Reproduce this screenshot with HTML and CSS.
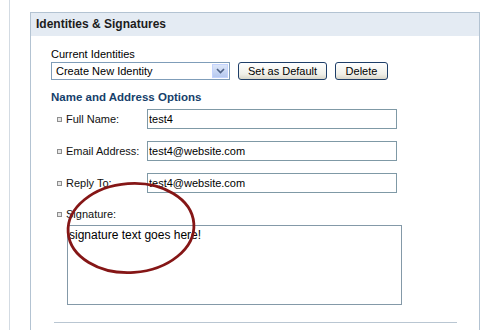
FILE: index.html
```html
<!DOCTYPE html>
<html lang="en">
<head>
    <meta charset="UTF-8">
    <title>Identities &amp; Signatures</title>
    <link rel="stylesheet" href="styles.css">
</head>
<body>

    <div class="page">
        <!-- Identities panel -->
        <div class="panel">
            <div class="panel-head">Identities &amp; Signatures</div>

            <div class="panel-body">
                <div class="caption">Current Identities</div>
                <div class="identity-row">
                    <div class="select">
                        <span class="select-value">Create New Identity</span>
                        <span class="select-arrow">
                            <svg width="9" height="6" viewBox="0 0 9 6"><path d="M1 1 L4.5 4.5 L8 1" fill="none" stroke="#4d6185" stroke-width="1.6"/></svg>
                        </span>
                    </div>
                    <button class="btn btn-default">Set as Default</button>
                    <button class="btn btn-delete">Delete</button>
                </div>

                <h2 class="section-title">Name and Address Options</h2>

                <div class="field">
                    <span class="bullet"></span>
                    <label>Full Name:</label>
                    <input type="text" value="test4">
                </div>
                <div class="field">
                    <span class="bullet"></span>
                    <label>Email Address:</label>
                    <input type="text" value="test4@website.com">
                </div>
                <div class="field">
                    <span class="bullet"></span>
                    <label>Reply To:</label>
                    <input type="text" value="test4@website.com">
                </div>

                <div class="field field-sig">
                    <span class="bullet"></span>
                    <label>Signature:</label>
                </div>
                <textarea class="signature">signature text goes here!</textarea>

                <div class="divider"></div>
            </div>
        </div>

        <!-- hand-drawn highlight -->
        <svg class="circle" width="140" height="100" viewBox="0 0 140 100">
            <ellipse cx="70" cy="50" rx="63" ry="44.5" fill="none" stroke="#851616" stroke-width="2.8" transform="rotate(-4 70 50)"/>
        </svg>
    </div>

</body>
</html>
```

FILE: styles.css
```css
/* General */
body {
    margin: 0;
    background: #fff;
    font-family: "Liberation Sans", Arial, sans-serif;
    font-size: 11px;
    color: #000;
}

.page {
    position: relative;
    height: 330px;
    overflow: hidden;
    margin-left: 9px;
    border-left: 1px solid #d3dbe3;
    padding: 12px 0 0 20px;
    box-sizing: border-box;
}

/* Panel */
.panel {
    width: 448px;
    border: 1px solid #b3c3d2;
    border-bottom: none;
    height: 330px;
}

.panel-head {
    height: 23px;
    line-height: 23px;
    background: #e4ebf3;
    padding-left: 5px;
    font-weight: bold;
    font-size: 12px;
    color: #1c1c1c;
}

.panel-body {
    padding: 11px 0 0 20px;
}

.caption {
    height: 15px;
    line-height: 15px;
}

/* Identity selector */
.identity-row {
    display: flex;
    align-items: center;
    height: 18px;
}

.select {
    display: flex;
    align-items: center;
    justify-content: space-between;
    width: 173px;
    height: 16px;
    border: 1px solid #7f9db9;
    padding-left: 4px;
    font-size: 11px;
}

.select-arrow {
    display: flex;
    align-items: center;
    justify-content: center;
    width: 16px;
    height: 14px;
    margin-right: 1px;
    background: linear-gradient(#dce6f9, #b6c9ef);
    border: 1px solid #c3d3fd;
    box-sizing: border-box;
}

.btn {
    height: 18px;
    margin-left: 8px;
    padding: 0;
    font-family: inherit;
    font-size: 11px;
    border: 1px solid #1e3e68;
    border-radius: 3px;
    background: linear-gradient(#ffffff, #f0efe8 70%, #d9d6c9);
    color: #000;
}

.btn-default {
    width: 89px;
}

.btn-delete {
    width: 53px;
}

.section-title {
    margin: 11px 0 6px;
    font-size: 11.5px;
    font-weight: bold;
    color: #163f6b;
}

/* Fields */
.field {
    display: flex;
    align-items: center;
    height: 20px;
    margin-bottom: 12px;
    padding-left: 6px;
}

.bullet {
    width: 5px;
    height: 5px;
    border: 1px solid #8e8e8e;
    background: #e6e6e6;
    margin-right: 4px;
    box-sizing: border-box;
}

.field label {
    width: 81px;
    font-size: 11px;
    color: #111;
}

.field input {
    width: 250px;
    height: 20px;
    box-sizing: border-box;
    border: 1px solid #7f99a6;
    padding: 0 0 0 1px;
    font-family: inherit;
    font-size: 11px;
    color: #000;
}

.field-sig {
    height: 14px;
    padding-top: 2px;
    margin-bottom: 4px;
}

.signature {
    display: block;
    width: 335px;
    height: 80px;
    margin-left: 16px;
    box-sizing: border-box;
    border: 1px solid #8499a8;
    padding: 2px 1px;
    resize: none;
    font-family: inherit;
    font-size: 12px;
    color: #000;
}

.divider {
    width: 403px;
    margin: 17px 0 0 3px;
    border-top: 1px solid #b9c6d2;
}

/* Highlight */
.circle {
    position: absolute;
    left: 51px;
    top: 178px;
}
```
